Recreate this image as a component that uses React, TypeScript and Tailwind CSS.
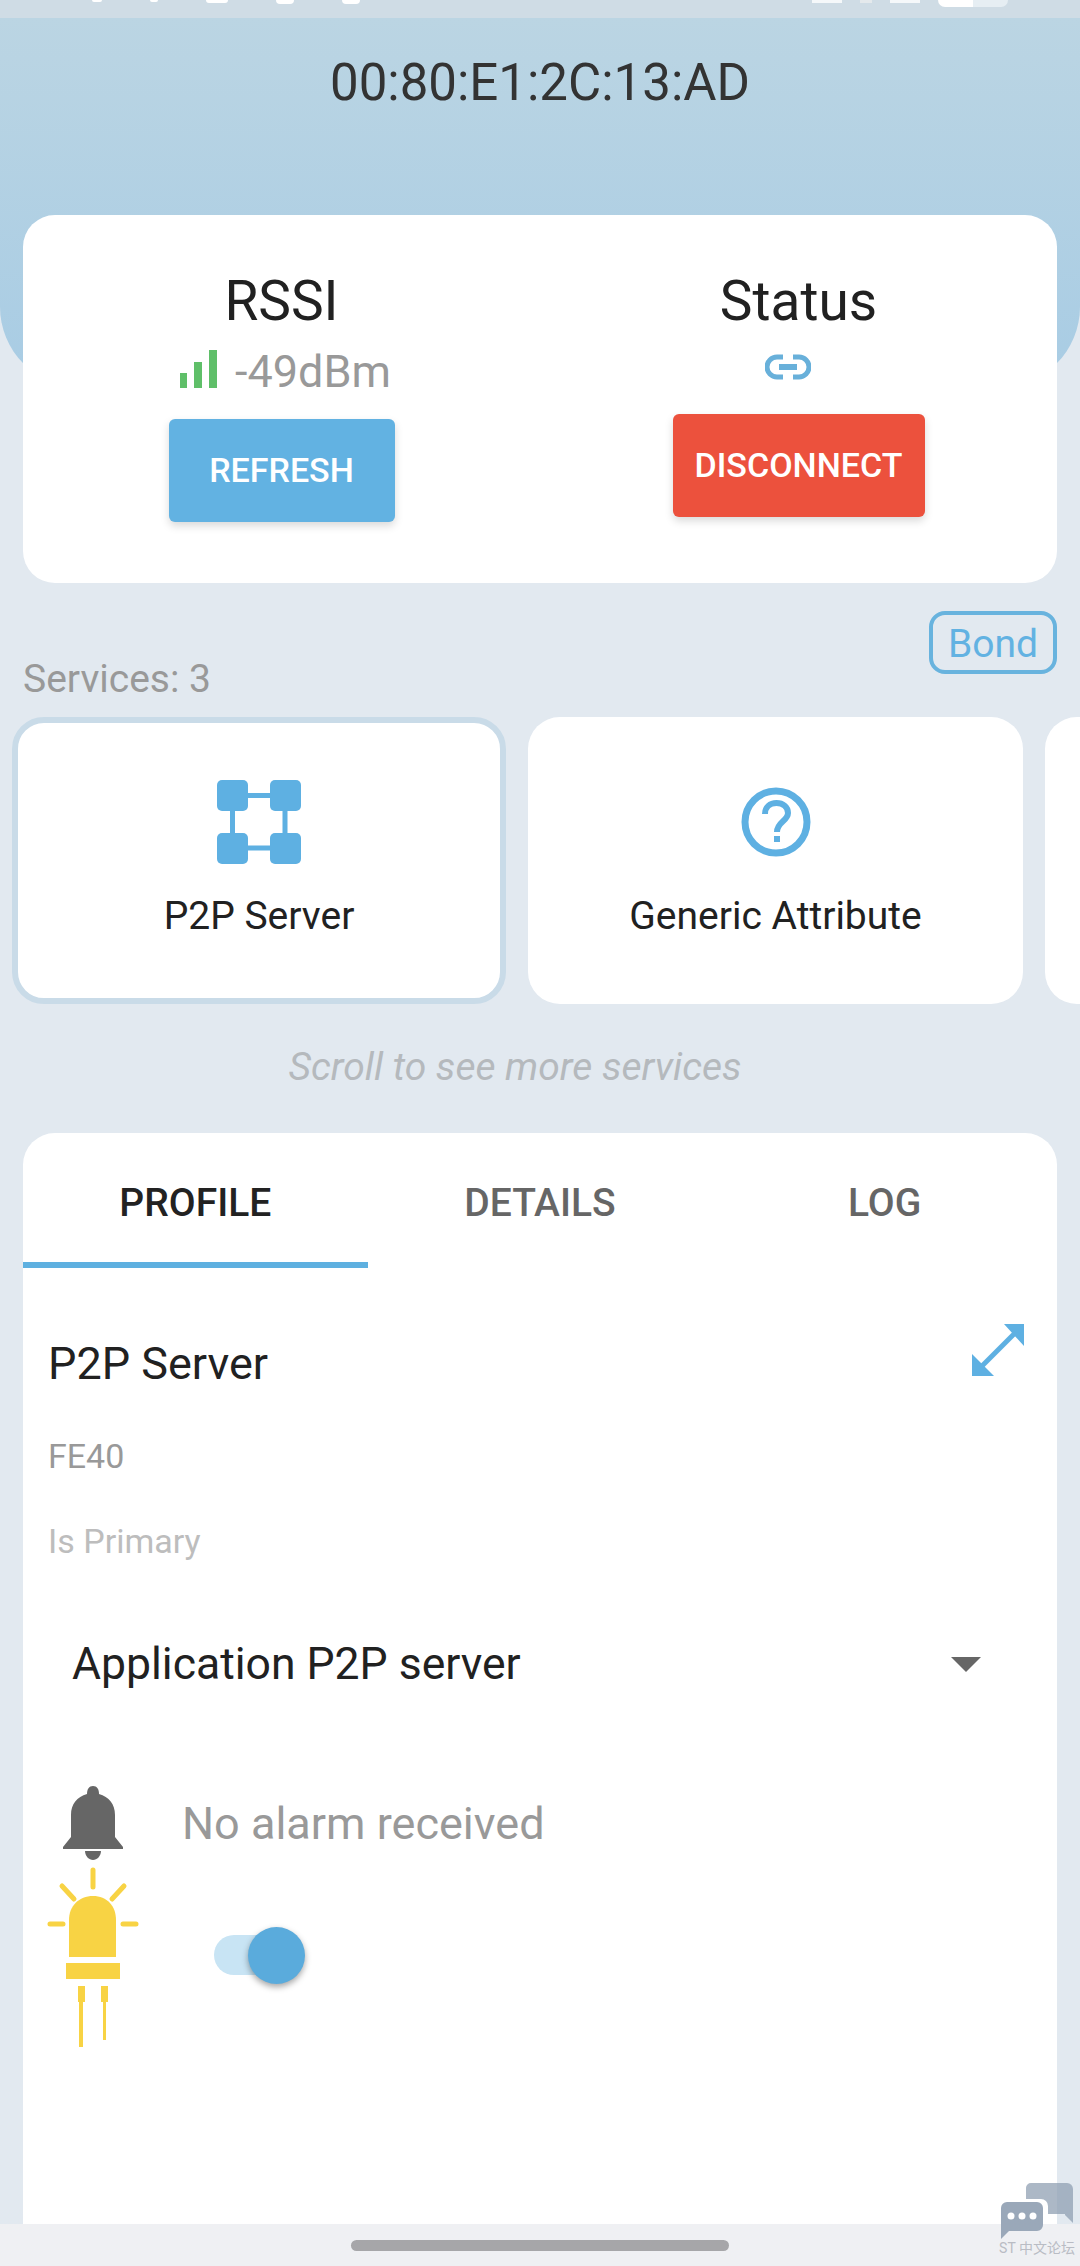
import React from 'react';

const roboto = { fontFamily: 'Roboto, sans-serif' };

function SignalIcon() {
  return (
    <svg width="37" height="38" viewBox="0 0 37 38" className="-mt-[6px] shrink-0">
      <rect x="0" y="23" width="7" height="15" fill="#5fbf69" />
      <rect x="14" y="12" width="8" height="26" fill="#5fbf69" />
      <rect x="29" y="0" width="8" height="38" fill="#5fbf69" />
    </svg>
  );
}

function LinkIcon() {
  return (
    <svg width="46" height="26" viewBox="0 0 46 26" fill="none">
      <path d="M18 3H12a10 10 0 0 0 0 20h6M28 3h6a10 10 0 0 1 0 20h-6" stroke="#68b0da" strokeWidth="5" />
      <path d="M14 13h18" stroke="#68b0da" strokeWidth="6" />
    </svg>
  );
}

function NodesIcon() {
  return (
    <svg width="84" height="84" viewBox="0 0 84 84">
      <path d="M16 15.500h52M68 15v53M68 68H16M15.500 68V15" stroke="#5eb0e2" strokeWidth="5" fill="none" />
      <rect x="0" y="0" width="31" height="31" rx="5" fill="#5eb0e2" />
      <rect x="53" y="0" width="31" height="31" rx="5" fill="#5eb0e2" />
      <rect x="0" y="53" width="31" height="31" rx="5" fill="#5eb0e2" />
      <rect x="53" y="53" width="31" height="31" rx="5" fill="#5eb0e2" />
    </svg>
  );
}

function QuestionIcon() {
  return (
    <svg width="70" height="70" viewBox="0 0 70 70" fill="none">
      <circle cx="35" cy="35" r="31" stroke="#5eb0e2" strokeWidth="7" />
      <path d="M24 27c0-7 5-11 11.500-11S47 20 47 26c0 8-11 9-11 19" stroke="#5eb0e2" strokeWidth="6" />
      <rect x="33" y="49" width="6" height="6" fill="#5eb0e2" />
    </svg>
  );
}

function ExpandIcon() {
  return (
    <svg width="52" height="52" viewBox="0 0 52 52">
      <path d="M32 0h20v22zM0 30l22 22H0z" fill="#5eb0e2" />
      <path d="M43 9L9 43" stroke="#5eb0e2" strokeWidth="5" />
    </svg>
  );
}

function BellIcon() {
  return (
    <svg width="60" height="74" viewBox="0 0 60 74">
      <path
        d="M30 0c4 0 6 3 6 8 10 3 16 10 16 21v22l8 10v2H0v-2l8-10V29C8 18 14 11 24 8c0-5 2-8 6-8z"
        fill="#666666"
      />
      <path d="M22 65h16c0 5-4 9-8 9s-8-4-8-9z" fill="#666666" />
    </svg>
  );
}

function LedIcon() {
  return (
    <svg width="94" height="180" viewBox="0 0 94 180" fill="none">
      <g stroke="#f8d344" strokeWidth="5" strokeLinecap="round">
        <path d="M47 3v17M16 19l12 13M78 19L66 32M4 57h13M77 57h13" />
      </g>
      <path d="M23 90V53C23 39 33 29 47 29s23 10 23 24v37z" fill="#f8d344" />
      <rect x="20" y="96" width="54" height="16" fill="#f8d344" />
      <rect x="32" y="119" width="7" height="16" fill="#f8d344" />
      <rect x="55" y="119" width="7" height="16" fill="#f8d344" />
      <rect x="33" y="133" width="4" height="47" fill="#f8d344" />
      <rect x="57" y="133" width="3" height="40" fill="#f8d344" />
    </svg>
  );
}

function ForumWidget() {
  return (
    <div className="absolute right-[7px] top-[2183px] flex w-[72px] flex-col items-center">
      <svg width="72" height="57" viewBox="0 0 72 57">
        <path d="M25 16V5a5 5 0 0 1 5-5h36a6 6 0 0 1 6 6v34l-8-8V31H47V23a7 7 0 0 0-7-7z" fill="#8c9cb0" fillOpacity="0.72" />
        <path d="M6 19h30a6 6 0 0 1 6 6v17a6 6 0 0 1-6 6H8l-8 8V25a6 6 0 0 1 6-6z" fill="#9aa8b9" />
        <circle cx="10" cy="33" r="3.500" fill="#fff" />
        <circle cx="21" cy="33" r="3.500" fill="#fff" />
        <circle cx="32" cy="33" r="3.500" fill="#fff" />
      </svg>
      <span
        className="whitespace-nowrap text-[14px] leading-[16px] text-[#b9bcc4]"
        style={{ fontFamily: 'Roboto, "Noto Sans CJK SC", sans-serif' }}
      >
        ST 中文论坛
      </span>
    </div>
  );
}

export default function App() {
  return (
    <div className="relative flex h-[2266px] w-[1080px] flex-col overflow-hidden bg-[#e2e9f0]" style={roboto}>
      {/* status bar, only the bottom of the glyphs is on screen */}
      <div className="flex h-[18px] items-start justify-between bg-[#cfdce5] pl-[92px] pr-[72px]">
        <div className="flex gap-[48px]">
          <div className="h-[2px] w-[10px] rounded-b bg-white" />
          <div className="h-[2px] w-[8px] rounded-b bg-white" />
          <div className="h-[3px] w-[22px] rounded-b bg-white" />
          <div className="h-[4px] w-[18px] rounded-b-full bg-white" />
          <div className="h-[4px] w-[18px] rounded-b-full bg-white" />
        </div>
        <div className="flex items-start gap-[18px]">
          <div className="h-[3px] w-[30px] bg-white/80" />
          <div className="h-[3px] w-[12px] bg-[#e4e9ec]" />
          <div className="h-[3px] w-[30px] bg-white/80" />
          <div className="h-[7px] w-[70px] rounded-b-[8px] bg-[linear-gradient(90deg,#ffffff_50%,#e6eef3_50%)]" />
        </div>
      </div>

      {/* header */}
      <div className="h-[369px] rounded-b-[80px] bg-gradient-to-b from-[#bbd5e3] to-[#a8cce4] pt-[37px] text-center">
        <h1 className="text-[51px] leading-[56px] text-[#333333]">00:80:E1:2C:13:AD</h1>
      </div>

      {/* rssi / status card */}
      <div className="mx-[23px] -mt-[172px] grid h-[368px] grid-cols-2 rounded-[32px] bg-white">
        <div className="flex flex-col items-center pt-[54px]">
          <div className="text-[55px] leading-[64px] text-[#212121]">RSSI</div>
          <div className="mt-[14px] flex h-[50px] items-center gap-[18px] pl-[8px]">
            <SignalIcon />
            <span className="text-[45px] leading-[50px] text-[#999999]">-49dBm</span>
          </div>
          <button className="mt-[22px] h-[103px] w-[226px] rounded-[6px] bg-[#62b2e2] text-[34px] font-medium text-white shadow-[0_4px_8px_rgba(0,0,0,0.15)]">
            REFRESH
          </button>
        </div>
        <div className="flex flex-col items-center pt-[54px]">
          <div className="text-[55px] leading-[64px] text-[#212121]">Status</div>
          <div className="mt-[16px] flex h-[36px] items-center justify-center pr-[22px]">
            <LinkIcon />
          </div>
          <button className="mt-[29px] h-[103px] w-[252px] rounded-[6px] bg-[#ec513d] text-[34px] font-medium text-white shadow-[0_4px_8px_rgba(0,0,0,0.15)]">
            DISCONNECT
          </button>
        </div>
      </div>

      {/* services */}
      <div className="mx-[23px] mt-[28px] flex h-[106px] items-start justify-between">
        <span className="mt-[46px] text-[39px] leading-[44px] text-[#999999]">Services: 3</span>
        <button className="flex h-[63px] w-[128px] items-center justify-center rounded-[16px] border-[4px] border-[#68b3de] pt-[4px] text-[39px] text-[#62b2e2]">
          Bond
        </button>
      </div>

      <div className="flex gap-[22px] overflow-hidden pl-[12px]">
        <div className="flex h-[287px] w-[494px] shrink-0 flex-col items-center rounded-[32px] border-[6px] border-[#c9dbe8] bg-white pt-[57px]">
          <NodesIcon />
          <span className="mt-[29px] text-[39px] leading-[46px] text-[#212121]">P2P Server</span>
        </div>
        <div className="flex h-[287px] w-[495px] shrink-0 flex-col items-center rounded-[32px] bg-white pt-[70px]">
          <QuestionIcon />
          <span className="mt-[36px] text-[39px] leading-[46px] text-[#212121]">Generic Attribute</span>
        </div>
        <div className="h-[287px] w-[495px] shrink-0 rounded-[32px] bg-white" />
      </div>

      <div className="mt-[41px] pr-[50px] text-center text-[39px] italic leading-[44px] text-[#b5b9bd]">
        Scroll to see more services
      </div>

      {/* profile card */}
      <div className="mx-[23px] mt-[44px] flex-1 rounded-t-[32px] bg-white">
        <div className="grid h-[135px] grid-cols-3 text-center text-[39px] font-medium">
          <div className="h-[135px] border-b-[6px] border-[#5eb0e0] pt-[47px] leading-[46px] text-[#222222]">PROFILE</div>
          <div className="pt-[47px] leading-[46px] text-[#666666]">DETAILS</div>
          <div className="pt-[47px] leading-[46px] text-[#666666]">LOG</div>
        </div>

        <div className="flex items-start justify-between pl-[25px] pr-[33px]">
          <span className="mt-[69px] text-[45px] leading-[54px] text-[#212121]">P2P Server</span>
          <div className="mt-[56px]">
            <ExpandIcon />
          </div>
        </div>
        <div className="ml-[25px] mt-[46px] text-[34px] leading-[38px] text-[#999999]">FE40</div>
        <div className="ml-[25px] mt-[47px] text-[34px] leading-[38px] text-[#bdbdbd]">Is Primary</div>

        <div className="mt-[76px] flex items-center justify-between pl-[49px] pr-[76px]">
          <span className="text-[44.500px] leading-[56px] text-[#212121]">Application P2P server</span>
          <div className="h-0 w-0 border-x-[15px] border-t-[15px] border-x-transparent border-t-[#666666]" />
        </div>

        <div className="ml-[40px] mt-[94px] flex items-center">
          <BellIcon />
          <span className="ml-[59px] pt-[2px] text-[45px] leading-[54px] text-[#999999]">No alarm received</span>
        </div>

        <div className="ml-[23px] mt-[7px] flex items-start">
          <LedIcon />
          <div className="relative ml-[74px] mt-[68px] h-[40px] w-[80px] rounded-full bg-[#c8e4f4]">
            <div className="absolute -top-[8px] right-[-11px] h-[57px] w-[57px] rounded-full bg-[#5aabdc] shadow-[0_3px_6px_rgba(0,0,0,0.35)]" />
          </div>
        </div>
      </div>

      {/* nav bar */}
      <div className="flex h-[42px] justify-center bg-[#eff0f3] pt-[16px]">
        <div className="h-[11px] w-[378px] rounded-full bg-[#a6a6a9]" />
      </div>

      <ForumWidget />
    </div>
  );
}
